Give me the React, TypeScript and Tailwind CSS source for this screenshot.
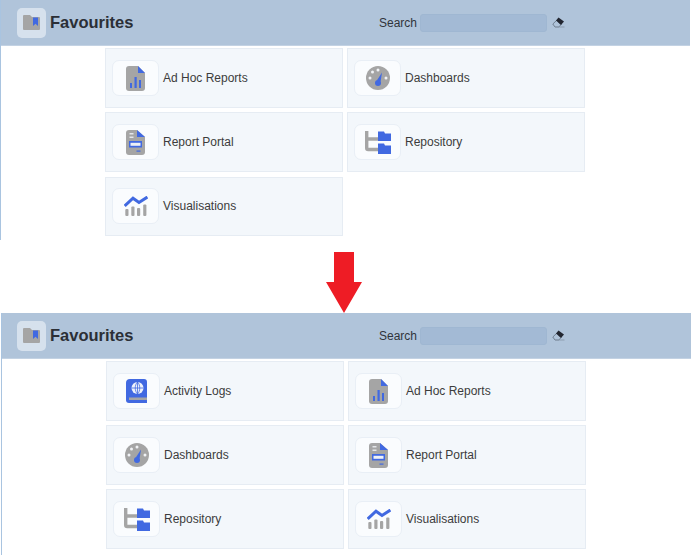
const BLUE = "#4169e1";
const GREY = "#a5a5a5";

function ReportIcon() {
  return (
    <svg width="19" height="25" viewBox="0 0 19 25">
      <path d="M3 0H12L19 7V22a3 3 0 0 1-3 3H3a3 3 0 0 1-3-3V3a3 3 0 0 1 3-3Z" fill={GREY} />
      <path d="M12 0L19 7H12Z" fill={BLUE} />
      <rect x="4" y="17" width="2" height="5" fill={BLUE} />
      <rect x="8.5" y="11" width="2.2" height="11" fill={BLUE} />
      <rect x="13" y="14" width="2" height="8" fill={BLUE} />
    </svg>
  );
}

function GaugeIcon() {
  return (
    <svg width="24" height="24" viewBox="0 0 24 24">
      <circle cx="12" cy="12" r="12" fill={GREY} />
      <circle cx="4" cy="12" r="1.5" fill="#f1f3f6" />
      <circle cx="6.5" cy="6" r="1.5" fill="#f1f3f6" />
      <circle cx="12" cy="4" r="1.5" fill="#f1f3f6" />
      <circle cx="20" cy="12" r="1.5" fill="#f1f3f6" />
      <path d="M16 6.5L14.6 15.5L10.8 14.4Z" fill={BLUE} />
      <circle cx="12" cy="17" r="3" fill={BLUE} />
    </svg>
  );
}

function PortalIcon() {
  return (
    <svg width="19" height="25" viewBox="0 0 19 25">
      <path d="M3 0H11L19 7V22a3 3 0 0 1-3 3H3a3 3 0 0 1-3-3V3a3 3 0 0 1 3-3Z" fill={GREY} />
      <path d="M11 0L19 7H11Z" fill={BLUE} />
      <rect x="3.5" y="3" width="4" height="1.5" fill="#e4e6ea" />
      <rect x="3.5" y="6.5" width="4" height="1.5" fill="#e4e6ea" />
      <rect x="3" y="11" width="13" height="6.5" fill={BLUE} />
      <rect x="4.5" y="12.8" width="10" height="3" fill="#eef1f6" />
      <rect x="10.5" y="20.5" width="4" height="1.2" fill={BLUE} />
    </svg>
  );
}

function RepositoryIcon() {
  return (
    <svg width="26" height="23" viewBox="0 0 26 23">
      <path d="M1.7 0V17a1.5 1.5 0 0 0 1.5 1.5H13M2 8H13" fill="none" stroke={GREY} strokeWidth="3.4" />
      <path d="M13 0.5H19L20 2.5H26V10H13Z" fill={BLUE} />
      <path d="M13 12.5H19L20 14.5H26V23H13Z" fill={BLUE} />
    </svg>
  );
}

function ChartIcon() {
  return (
    <svg width="24" height="20" viewBox="0 0 24 20">
      <path d="M0.7 10L9 2.2L15 6.5L23.4 1" fill="none" stroke={BLUE} strokeWidth="3" />
      <rect x="1.3" y="13" width="3.2" height="7" rx="1" fill={GREY} />
      <rect x="7.3" y="10.5" width="3.2" height="9.5" rx="1" fill={GREY} />
      <rect x="13" y="12" width="3.2" height="8" rx="1" fill={GREY} />
      <rect x="19.2" y="8.5" width="3.2" height="11.5" rx="1" fill={GREY} />
    </svg>
  );
}

function LogsIcon() {
  return (
    <svg width="21" height="24" viewBox="0 0 21 24">
      <path d="M4 0H18a3 3 0 0 1 3 3V24H3a3 3 0 0 1-3-3V4a4 4 0 0 1 4-4Z" fill={BLUE} />
      <rect x="3" y="18.5" width="18" height="2.5" fill={GREY} />
      <circle cx="11.5" cy="9" r="6" fill="#eef2fb" />
      <path d="M5.5 9H17.5M11.5 3V15M11.5 3C8.5 6 8.5 12 11.5 15M11.5 3C14.5 6 14.5 12 11.5 15" fill="none" stroke={BLUE} strokeWidth="0.8" />
    </svg>
  );
}

function FavouriteIcon() {
  return (
    <svg width="17" height="15" viewBox="0 0 17 15">
      <path d="M1 0H7L9 2H16a1 1 0 0 1 1 1V14a1 1 0 0 1-1 1H1a1 1 0 0 1-1-1V1a1 1 0 0 1 1-1Z" fill={GREY} />
      <path d="M10 2.5H15V11L12.5 8.8L10 11Z" fill={BLUE} />
    </svg>
  );
}

function EraserIcon() {
  return (
    <svg width="13" height="11" viewBox="0 0 13 11">
      <path d="M0.8 7L5 3L9 7.5L7 10H3Z" fill="none" stroke="#6f7f90" strokeWidth="1" />
      <path d="M3.5 10H12.5" stroke="#8d9db0" strokeWidth="1" />
      <path d="M6.5 0.5L12 4.5L9 8L4 3.5Z" fill="#222630" />
    </svg>
  );
}

type Item = { label: string; icon: React.ReactNode };

const items: Record<string, Item> = {
  logs: { label: "Activity Logs", icon: <LogsIcon /> },
  adhoc: { label: "Ad Hoc Reports", icon: <ReportIcon /> },
  dash: { label: "Dashboards", icon: <GaugeIcon /> },
  portal: { label: "Report Portal", icon: <PortalIcon /> },
  repo: { label: "Repository", icon: <RepositoryIcon /> },
  vis: { label: "Visualisations", icon: <ChartIcon /> },
};

function Card({ item }: { item: Item }) {
  return (
    <div className="flex h-[60px] w-[238px] items-center gap-[4px] border border-[#e6ecf3] bg-[#f3f7fb] pl-[6px]">
      <span className="flex h-[36px] w-[47px] shrink-0 items-center justify-center rounded-[7px] border border-[#e9eff6] bg-[#fafcfe]">
        {item.icon}
      </span>
      <span className="text-[12px] text-[#3c3c3c]">{item.label}</span>
    </div>
  );
}

interface PanelProps {
  list: Item[];
  className: string;
  logoClass: string;
  gridClass?: string;
}

function Panel({ list, className, logoClass, gridClass = "" }: PanelProps) {
  return (
    <section className={className}>
      <header className="flex h-[46px] items-center border-b border-[#c3d2e3] bg-[#b0c4da]">
        <span className={`flex h-[30px] w-[29px] items-center justify-center rounded-[5px] bg-[#d6e1ed] ${logoClass}`}>
          <FavouriteIcon />
        </span>
        <h1 className="ml-[4px] w-[329px] text-[16.5px] font-bold text-[#2b2f36]">Favourites</h1>
        <label className="text-[12px] text-[#30343b]">Search</label>
        <input
          className="ml-[3px] h-[18px] w-[127px] rounded-[3px] border border-[#9fb7d2] bg-[#a3bad5]"
          aria-label="Search"
        />
        <span className="ml-[5px] flex">
          <EraserIcon />
        </span>
      </header>
      <div className={`ml-[104px] mt-[2px] grid grid-cols-[238px_238px] gap-[4px] ${gridClass}`}>
        {list.map((item) => (
          <Card key={item.label} item={item} />
        ))}
      </div>
    </section>
  );
}

export default function App() {
  return (
    <div className="h-[555px] w-[691px] overflow-hidden bg-white font-['Liberation_Sans',Arial,sans-serif]">
      <Panel
        className="h-[240px] w-[690px] border-l border-[#a9c4e0]"
        logoClass="ml-[16px]"
        gridClass="[&>*:nth-child(5)]:mt-[1px] [&>*:nth-child(5)]:h-[59px] [&>*:nth-child(5)]:pb-[1px]"
        list={[items.adhoc, items.dash, items.portal, items.repo, items.vis]}
      />
      <div className="flex h-[73px] w-[691px] items-end justify-center pr-[3px]">
        <svg width="36" height="61" viewBox="0 0 36 61">
          <path d="M8 0H28V30H36L18 61L0 30H8Z" fill="#ee1c25" />
        </svg>
      </div>
      <Panel
        className="ml-[1px] h-[242px] w-[690px] border-l border-[#a9c4e0]"
        logoClass="ml-[15px]"
        list={[items.logs, items.adhoc, items.dash, items.portal, items.repo, items.vis]}
      />
    </div>
  );
}
